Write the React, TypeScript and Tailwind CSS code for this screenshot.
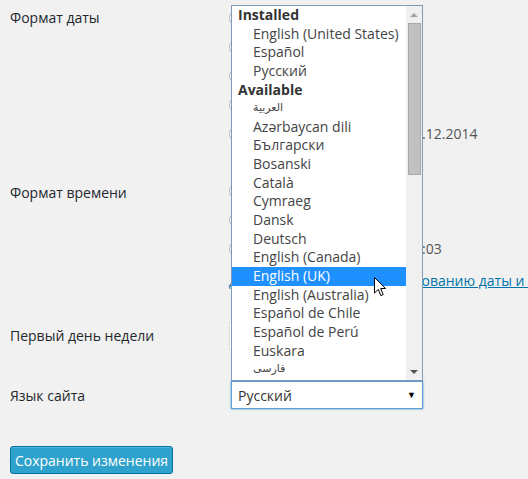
import React from "react";

type Opt = { label: string; group?: boolean; active?: boolean; rtl?: boolean };

const options: Opt[] = [
  { label: "Installed", group: true },
  { label: "English (United States)" },
  { label: "Español" },
  { label: "Русский" },
  { label: "Available", group: true },
  { label: "العربية", rtl: true },
  { label: "Azərbaycan dili" },
  { label: "Български" },
  { label: "Bosanski" },
  { label: "Català" },
  { label: "Cymraeg" },
  { label: "Dansk" },
  { label: "Deutsch" },
  { label: "English (Canada)" },
  { label: "English (UK)", active: true },
  { label: "English (Australia)" },
  { label: "Español de Chile" },
  { label: "Español de Perú" },
  { label: "Euskara" },
  { label: "فارسی", rtl: true },
];

function Radio() {
  return <span className="block w-[16px] h-[16px] shrink-0 rounded-full border border-[#b4b9be] bg-white" />;
}

// the dropdown covers these rows, only the radio edge pokes out
function RadioRow() {
  return (
    <div className="h-[29px] flex items-center">
      <Radio />
    </div>
  );
}

function CustomRow({ preview }: { preview: string }) {
  return (
    <div className="h-[29px] flex items-center">
      <Radio />
      <span className="shrink-0 w-[161px]" />
      <span className="text-[#555] whitespace-nowrap">{preview}</span>
    </div>
  );
}

function Cursor() {
  return (
    <svg width="13" height="21" viewBox="0 0 13 21" className="absolute left-[374px] top-[277px]">
      <path
        d="M0.5 0.5 L0.5 16 L4.3 12.4 L6.8 18.6 L9.2 17.6 L6.7 11.5 L11.6 11.5 Z"
        fill="#fff"
        stroke="#000"
        strokeWidth="1"
      />
    </svg>
  );
}

function LanguageList() {
  return (
    <div className="absolute left-[231px] top-[5px] w-[192px] h-[376px] border border-[#7f9bb8] bg-white flex overflow-hidden">
      <div className="flex-1 overflow-hidden">
        {options.map((o, i) => (
          <div
            key={i}
            className={
              "h-[18.65px] leading-[18.65px] whitespace-nowrap " +
              (o.group ? "pl-[6px] font-bold text-[#333] " : "pl-[21px] ") +
              (o.active ? "bg-[#1e90ff] text-white" : o.group ? "" : "text-[#444]") +
              (o.rtl ? " text-[11px] font-['DejaVu_Sans',sans-serif]" : "")
            }
          >
            {o.label}
          </div>
        ))}
      </div>
      <div className="w-[16px] bg-[#f0f0f0] flex flex-col items-center">
        <div className="h-[17px] flex items-center justify-center">
          <span className="w-0 h-0 border-l-[4px] border-r-[4px] border-b-[4px] border-l-transparent border-r-transparent border-b-[#a3a3a3]" />
        </div>
        <div className="w-[13px] h-[152px] bg-[#c1c1c1] border border-[#a8a8a8]" />
        <div className="flex-1" />
        <div className="h-[17px] flex items-center justify-center">
          <span className="w-0 h-0 border-l-[4px] border-r-[4px] border-t-[4px] border-l-transparent border-r-transparent border-t-[#505050]" />
        </div>
      </div>
    </div>
  );
}

export default function App() {
  return (
    <div className="relative w-[528px] h-[479px] overflow-hidden bg-[#f1f1f1] font-['Open_Sans',sans-serif] text-[14px] text-[#23282d]">
      {/* date format */}
      <div className="flex h-[148px]">
        <div className="w-[229px] shrink-0 pl-[10px] pt-[3px] leading-[29px]">Формат даты</div>
        <div className="pt-[3px] flex flex-col">
          <RadioRow />
          <RadioRow />
          <RadioRow />
          <RadioRow />
          <CustomRow preview="14.12.2014" />
        </div>
      </div>

      {/* time format */}
      <div className="flex h-[115px]">
        <div className="w-[229px] shrink-0 pl-[10px] pt-[30px] leading-[29px]">Формат времени</div>
        <div className="pt-[28px] flex flex-col">
          <RadioRow />
          <RadioRow />
          <CustomRow preview="19:03" />
        </div>
      </div>

      <div className="flex mt-[8px] h-[20px] leading-[20px]">
        <div className="w-[229px] shrink-0" />
        <a href="#" className="shrink-0 text-[#0073aa] underline whitespace-nowrap">
          Документация по форматированию даты и времени.
        </a>
      </div>

      {/* week start */}
      <div className="flex mt-[30px] h-[29px] items-center">
        <div className="w-[229px] shrink-0 pl-[10px]">Первый день недели</div>
        <div className="h-[28px] w-[120px] border border-[#ddd] bg-white" />
      </div>

      {/* site language */}
      <div className="flex mt-[31px] h-[28px] items-center">
        <div className="w-[229px] shrink-0 pl-[10px]">Язык сайта</div>
        <div className="ml-[2px] h-[28px] w-[192px] border border-[#5b9dd9] bg-white shadow-[0_0_2px_rgba(30,140,190,0.8)] flex items-center justify-between pl-[6px] pr-[6px] text-[#333]">
          <span>Русский</span>
          <span className="text-[9px] text-black">▼</span>
        </div>
      </div>

      <div className="mt-[37px] pl-[10px]">
        <button className="h-[28px] w-[163px] rounded-[3px] border border-[#0074a2] bg-[#2ea2cc] text-white text-[14px] shadow-[inset_0_1px_0_rgba(120,200,230,0.5)]">
          Сохранить изменения
        </button>
      </div>

      <LanguageList />
      <Cursor />
    </div>
  );
}
